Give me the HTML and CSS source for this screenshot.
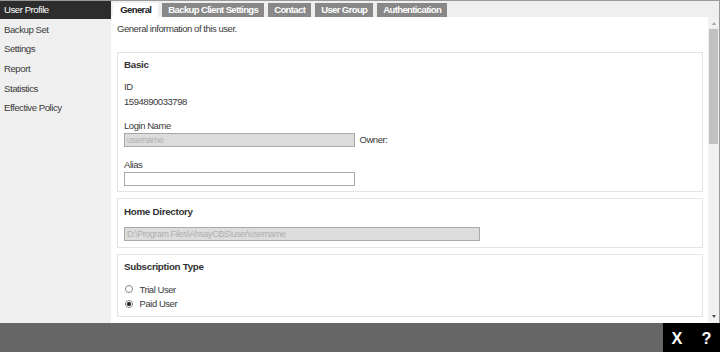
FILE: index.html
```html
<!DOCTYPE html>
<html>
<head>
<meta charset="utf-8">
<link rel="stylesheet" href="styles.css">
</head>
<body>
<div class="app">
  <div class="body">
    <nav class="sidebar">
      <div class="nav-item active">User Profile</div>
      <div class="nav-item">Backup Set</div>
      <div class="nav-item">Settings</div>
      <div class="nav-item">Report</div>
      <div class="nav-item">Statistics</div>
      <div class="nav-item">Effective Policy</div>
    </nav>
    <main class="main">
      <div class="tabs">
        <div class="tab active">General</div>
        <div class="tab">Backup Client Settings</div>
        <div class="tab">Contact</div>
        <div class="tab">User Group</div>
        <div class="tab">Authentication</div>
      </div>
      <div class="content-wrap">
        <div class="content">
          <p class="intro">General information of this user.</p>

          <section class="panel">
            <h2 class="panel-title">Basic</h2>
            <div class="field">
              <div class="label">ID</div>
              <div class="value">1594890033798</div>
            </div>
            <div class="field field-gap">
              <div class="label">Login Name</div>
              <div class="input-row">
                <div class="input disabled">username</div>
                <span class="owner">Owner:</span>
              </div>
            </div>
            <div class="field field-gap2">
              <div class="label">Alias</div>
              <div class="input-row">
                <div class="input"></div>
              </div>
            </div>
          </section>

          <section class="panel">
            <h2 class="panel-title">Home Directory</h2>
            <div class="input disabled wide">D:\Program Files\AhsayCBS\user\username</div>
          </section>

          <section class="panel">
            <h2 class="panel-title">Subscription Type</h2>
            <div class="radios">
              <label class="radio"><span class="radio-dot"></span>Trial User</label>
              <label class="radio"><span class="radio-dot checked"></span>Paid User</label>
            </div>
          </section>
        </div>
        <div class="scrollbar">
          <div class="sb-arrow up"></div>
          <div class="sb-track"><div class="sb-thumb"></div></div>
          <div class="sb-arrow down"></div>
        </div>
      </div>
    </main>
  </div>
  <footer class="footer">
    <div class="actions"><span class="act-x">X</span><span class="act-q">?</span></div>
  </footer>
</div>
</body>
</html>
```

FILE: styles.css
```css
* { box-sizing: border-box; }
html, body { margin: 0; padding: 0; }
body {
  width: 720px;
  height: 352px;
  overflow: hidden;
  font-family: "Liberation Sans", Arial, sans-serif;
  font-size: 9.5px;
  letter-spacing: -0.45px;
  color: #3a3a3a;
  background: #fff;
}
.app {
  width: 720px;
  height: 352px;
  display: flex;
  flex-direction: column;
}
.body {
  height: 323px;
  display: flex;
  border-top: 1px solid #9a9a9a;
  border-right: 1px solid #9a9a9a;
}
.sidebar {
  width: 111px;
  flex: none;
  background: #efefef;
  display: flex;
  flex-direction: column;
  gap: 2.2px;
}
.nav-item {
  height: 17.5px;
  line-height: 17.5px;
  padding-left: 4px;
  color: #3a3a3a;
  font-size: 9.6px;
  letter-spacing: -0.45px;
}
.nav-item.active {
  background: #2d2d2d;
  color: #fff;
}
.main {
  flex: 1;
  display: flex;
  flex-direction: column;
  min-width: 0;
}
.tabs {
  height: 16.3px;
  background: #efefef;
  display: flex;
  align-items: flex-end;
  padding-left: 2.3px;
  gap: 4px;
}
.tab {
  height: 14px;
  line-height: 14px;
  padding: 0 6px;
  background: #888;
  color: #fff;
  font-weight: bold;
  font-size: 9.5px;
  letter-spacing: -0.62px;
}
.tab.active {
  background: #fff;
  color: #222;
  padding: 0 7px;
}
.content-wrap {
  flex: 1;
  display: flex;
  min-height: 0;
}
.content {
  flex: 1;
  background: #fff;
  padding: 6px 5px 0 6px;
  overflow: hidden;
}
.intro {
  margin: 0 0 17.8px 0;
  line-height: 11px;
}
.panel {
  border: 1px solid #e3e3e3;
  padding: 6.2px 6px 5.6px 6px;
  margin-bottom: 6px;
}
.panel-title {
  margin: 0 0 9.6px 0;
  font-size: 9.8px;
  line-height: 12px;
  font-weight: bold;
  letter-spacing: -0.3px;
  color: #333;
}
.field .label {
  line-height: 11px;
}
.field .value {
  margin-top: 3.7px;
  line-height: 11px;
}
.field-gap { margin-top: 13.5px; }
.field-gap2 { margin-top: 12.6px; }
.field .label + .input-row { margin-top: 1.6px; }
.input-row {
  display: flex;
  align-items: center;
  gap: 4.5px;
}
.input {
  width: 231px;
  height: 14px;
  line-height: 12px;
  border: 1px solid #a9a9a9;
  background: #fff;
  padding: 0 2px;
  color: #b0b0b0;
  font-size: 9px;
}
.input.disabled {
  background: #dcdcdc;
}
.input.wide {
  width: 356px;
}
.radios {
  display: flex;
  flex-direction: column;
  gap: 1.7px;
}
.radio {
  height: 13px;
  display: flex;
  align-items: center;
  gap: 6.5px;
  padding-left: 1px;
}
.radio-dot {
  width: 8px;
  height: 8px;
  border-radius: 50%;
  border: 1px solid #8a8a8a;
  background: #fff;
  display: flex;
  align-items: center;
  justify-content: center;
}
.radio-dot.checked::after {
  content: "";
  width: 3.5px;
  height: 3.5px;
  border-radius: 50%;
  background: #222;
}
.scrollbar {
  width: 11px;
  flex: none;
  background: #f1f1f1;
  display: flex;
  flex-direction: column;
  align-items: center;
}
.sb-arrow {
  width: 0;
  height: 0;
  border-left: 2.5px solid transparent;
  border-right: 2.5px solid transparent;
}
.sb-arrow.up {
  border-bottom: 3px solid #a3a3a3;
  margin-top: 5px;
  margin-bottom: 4px;
}
.sb-arrow.down {
  border-top: 3px solid #505050;
  margin-top: 2px;
  margin-bottom: 5px;
}
.sb-track {
  flex: 1;
  width: 100%;
  display: flex;
  justify-content: center;
}
.sb-thumb {
  width: 9px;
  height: 115px;
  background: #c1c1c1;
}
.footer {
  height: 29px;
  background: #666;
  display: flex;
  justify-content: flex-end;
}
.actions {
  width: 57px;
  height: 29px;
  background: #000;
  color: #fff;
  font-weight: bold;
  font-size: 16.3px;
  letter-spacing: 0;
  display: flex;
  align-items: center;
  padding-left: 8.5px;
  padding-top: 1px;
}
.act-x { margin-right: 19px; }
```
